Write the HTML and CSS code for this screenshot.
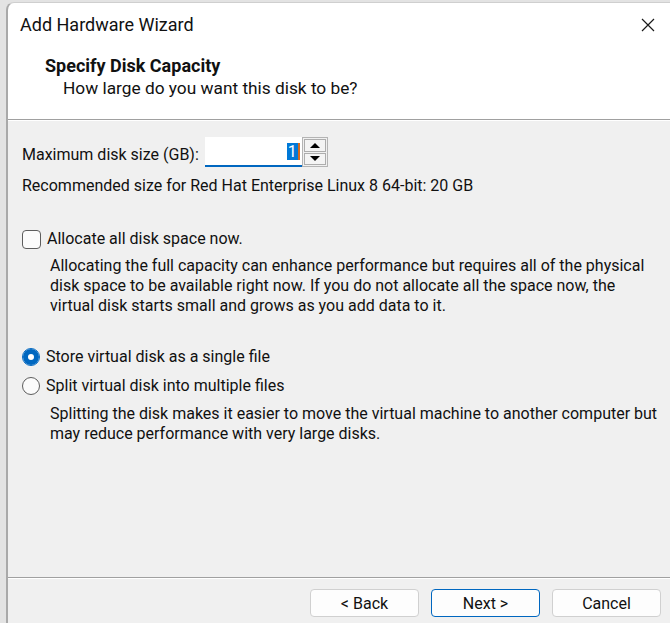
FILE: index.html
```html
<!DOCTYPE html>
<html lang="en">
<head>
    <meta charset="UTF-8">
    <title>Add Hardware Wizard</title>
    <link rel="stylesheet" href="styles.css">
</head>
<body>
    <div class="window">
        <div class="titlebar">
            <span class="title">Add Hardware Wizard</span>
            <svg class="close" width="14" height="14" viewBox="0 0 14 14">
                <path d="M1 1 L13 13 M13 1 L1 13" stroke="#1a1a1a" stroke-width="1.2" fill="none"/>
            </svg>
        </div>
        <div class="header">
            <div class="step-title">Specify Disk Capacity</div>
            <div class="step-sub">How large do you want this disk to be?</div>
        </div>

        <div class="panel">
            <div class="size-row">
                <span class="size-label">Maximum disk size (GB):</span>
                <div class="spinner">
                    <div class="spin-input"><span class="sel">1</span><span class="caret"></span></div>
                    <div class="spin-buttons">
                        <div class="spin-btn"><span class="arrow up"></span></div>
                        <div class="spin-btn"><span class="arrow down"></span></div>
                    </div>
                </div>
            </div>
            <div class="recommend">Recommended size for Red Hat Enterprise Linux 8 64-bit: 20 GB</div>

            <div class="option check-option">
                <span class="checkbox"></span>
                <span>Allocate all disk space now.</span>
            </div>
            <p class="note">Allocating the full capacity can enhance performance but requires all of the physical<br>disk space to be available right now. If you do not allocate all the space now, the<br>virtual disk starts small and grows as you add data to it.</p>

            <div class="option radio-first">
                <span class="radio checked"></span>
                <span>Store virtual disk as a single file</span>
            </div>
            <div class="option radio-second">
                <span class="radio"></span>
                <span>Split virtual disk into multiple files</span>
            </div>
            <p class="note split-note">Splitting the disk makes it easier to move the virtual machine to another computer but<br>may reduce performance with very large disks.</p>
        </div>

        <div class="footer">
            <button class="btn">&lt; Back</button>
            <button class="btn primary">Next &gt;</button>
            <button class="btn">Cancel</button>
        </div>
    </div>
</body>
</html>
```

FILE: styles.css
```css
body {
    margin: 0;
    padding: 2px 0 0 6px;
    background-color: #e3e3e3;
    font-family: Roboto, "Liberation Sans", sans-serif;
    font-size: 16px;
    color: #111;
    overflow: hidden;
}
.window {
    width: 700px;
    background-color: #fff;
    border-left: 2px solid #a9a9a9;
    border-top: 1px solid #cfcfcf;
    border-top-left-radius: 8px;
}
.titlebar {
    height: 42px;
    display: flex;
    align-items: center;
    justify-content: space-between;
    padding: 0 53px 0 12px;
}
.title {
    font-size: 18px;
}
.close {
    margin-top: 1px;
}
.header {
    height: 75px;
    padding: 11px 0 0 37px;
    box-sizing: border-box;
    border-bottom: 1px solid #a0a0a0;
    box-shadow: 0 1px 0 #fff;
}
.step-title {
    font-weight: bold;
    font-size: 18px;
    line-height: 20px;
}
.step-sub {
    margin: 2px 0 0 18px;
    font-size: 17.3px;
    line-height: 20px;
}
.panel {
    background-color: #f0f0f0;
    height: 457px;
    box-sizing: border-box;
    padding: 16px 0 0 14px;
    margin-top: 1px;
    border-bottom: 1px solid #a0a0a0;
    display: flex;
    flex-direction: column;
}
.size-row {
    display: flex;
    align-items: center;
    height: 30px;
}
.size-label {
    margin-right: 6px;
    padding-top: 4px;
}
.spinner {
    display: flex;
    height: 30px;
}
.spin-input {
    width: 97px;
    box-sizing: border-box;
    background-color: #fff;
    border-bottom: 2px solid #0067c0;
    display: flex;
    justify-content: flex-end;
    align-items: center;
    padding-right: 2px;
}
.sel {
    background-color: #0078d7;
    color: #fff;
    line-height: 17px;
    padding: 0 1px;
}
.caret {
    width: 2px;
    height: 17px;
    background-color: #d2691e;
}
.spin-buttons {
    width: 26px;
    border: 1px solid #b4b4b4;
    box-sizing: border-box;
    display: flex;
    flex-direction: column;
    gap: 1px;
    padding: 1px;
    background-color: #f0f0f0;
}
.spin-btn {
    flex: 1;
    border: 1px solid #adadad;
    background-color: #f4f4f4;
    display: flex;
    align-items: center;
    justify-content: center;
}
.arrow {
    width: 0;
    height: 0;
    border-left: 5px solid transparent;
    border-right: 5px solid transparent;
}
.arrow.up {
    border-bottom: 5px solid #000;
}
.arrow.down {
    border-top: 5px solid #000;
}
.recommend {
    margin-top: 9px;
    line-height: 20px;
}
.option {
    display: flex;
    align-items: center;
    gap: 6px;
    line-height: 20px;
}
.check-option {
    margin-top: 33px;
}
.checkbox {
    width: 17px;
    height: 17px;
    border: 1px solid #5d5d5d;
    border-radius: 4px;
    background-color: #fbfbfb;
}
.note {
    margin: 7px 0 0 28px;
    line-height: 20px;
    white-space: nowrap;
}
.radio-first {
    margin-top: 31px;
}
.radio-second {
    margin-top: 9px;
}
.radio {
    width: 16px;
    height: 16px;
    border: 1px solid #5d5d5d;
    border-radius: 50%;
    background-color: #fbfbfb;
}
.radio.checked {
    border-color: #0067c0;
    background-color: #fff;
    box-shadow: inset 0 0 0 5px #0067c0;
}
.split-note {
    margin-top: 8px;
}
.footer {
    border-top: 1px solid #fff;
    background-color: #f0f0f0;
    height: 60px;
    padding: 10px 0 0 302px;
    box-sizing: border-box;
    display: flex;
    gap: 12px;
    align-items: flex-start;
}
.btn {
    width: 109px;
    height: 28px;
    font-family: Roboto, "Liberation Sans", sans-serif;
    font-size: 16px;
    color: #111;
    background-color: #fdfdfd;
    border: 1px solid #d0d0d0;
    border-radius: 4px;
}
.btn.primary {
    border-color: #0067c0;
}
```
